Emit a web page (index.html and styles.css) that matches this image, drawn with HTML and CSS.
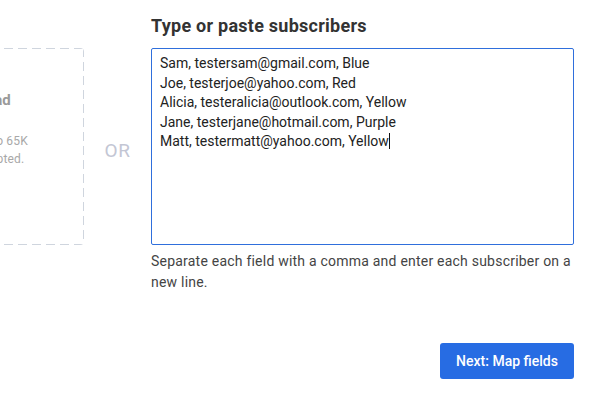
FILE: index.html
```html
<!DOCTYPE html>
<html>
<head>
<meta charset="utf-8">
<link rel="stylesheet" href="styles.css">
</head>
<body>
<div class="page">
  <div class="upload">
    <div class="upload-title">Upload</div>
    <div class="upload-note">Files up to 65K<br>are accepted.</div>
  </div>
  <div class="or">OR</div>
  <div class="paste">
    <h2 class="paste-title">Type or paste subscribers</h2>
    <div class="entry">
      <div>Sam, testersam@gmail.com, Blue</div>
      <div>Joe, testerjoe@yahoo.com, Red</div>
      <div>Alicia, testeralicia@outlook.com, Yellow</div>
      <div>Jane, testerjane@hotmail.com, Purple</div>
      <div>Matt, testermatt@yahoo.com, Yellow<span class="caret"></span></div>
    </div>
    <p class="help">Separate each field with a comma and enter each subscriber on a new line.</p>
    <div class="actions">
      <button class="next">Next: Map fields</button>
    </div>
  </div>
</div>
</body>
</html>
```
FILE: styles.css
```css
html, body {
  margin: 0;
  background: #ffffff;
  font-family: Roboto, "Noto Sans", sans-serif;
  overflow: hidden;
}
.page {
  display: flex;
  align-items: flex-start;
  width: 600px;
  height: 397px;
}
.upload {
  flex: none;
  box-sizing: border-box;
  width: 220px;
  height: 197px;
  margin-left: -136px;
  margin-top: 48px;
  border-radius: 4px;
  background-image:
    repeating-linear-gradient(90deg, #cfd5de 0 9px, transparent 9px 14px),
    repeating-linear-gradient(90deg, #cfd5de 0 9px, transparent 9px 14px),
    repeating-linear-gradient(180deg, #cfd5de 0 9px, transparent 9px 14px),
    repeating-linear-gradient(180deg, #cfd5de 0 9px, transparent 9px 14px);
  background-size: 100% 1px, 100% 1px, 1px 100%, 1px 100%;
  background-position: 0 0, 0 100%, 0 0, 100% 0;
  background-repeat: no-repeat;
  display: flex;
  flex-direction: column;
  align-items: center;
  padding: 42px 0 0 26px;
  text-align: center;
}
.upload-title {
  font-size: 15px;
  font-weight: 700;
  color: #9a9a9a;
  line-height: 20px;
}
.upload-note {
  margin-top: 22px;
  font-size: 12px;
  line-height: 18px;
  color: #a8a8a8;
  letter-spacing: 0.2px;
}
.or {
  flex: none;
  width: 67px;
  height: 197px;
  margin-top: 48px;
  display: flex;
  align-items: center;
  justify-content: center;
  padding-top: 8px;
  box-sizing: border-box;
  font-size: 19px;
  color: #c3c6d4;
  letter-spacing: 0.5px;
}
.paste {
  flex: none;
  width: 423px;
  padding-top: 14px;
}
.paste-title {
  margin: 0 0 10px 0;
  font-size: 18px;
  line-height: 24px;
  font-weight: 700;
  color: #333333;
  letter-spacing: 0.25px;
}
.entry {
  box-sizing: border-box;
  height: 197px;
  border: 1px solid #2f6fdc;
  border-radius: 2px;
  padding: 5px 8px 3px 8px;
  font-size: 14px;
  line-height: 19.5px;
  color: #222222;
}
.caret {
  display: inline-block;
  width: 1px;
  height: 16px;
  background: #111111;
  vertical-align: -3px;
}
.help {
  margin: 6px 0 0 0;
  font-size: 14px;
  line-height: 21px;
  color: #444444;
  letter-spacing: 0.22px;
}
.actions {
  display: flex;
  justify-content: flex-end;
  margin-top: 50px;
}
.next {
  width: 134px;
  height: 36px;
  border: none;
  border-radius: 3px;
  background: #276ce3;
  color: #ffffff;
  font-family: Roboto, "Noto Sans", sans-serif;
  font-size: 14px;
  font-weight: 500;
  padding: 0;
}
```
